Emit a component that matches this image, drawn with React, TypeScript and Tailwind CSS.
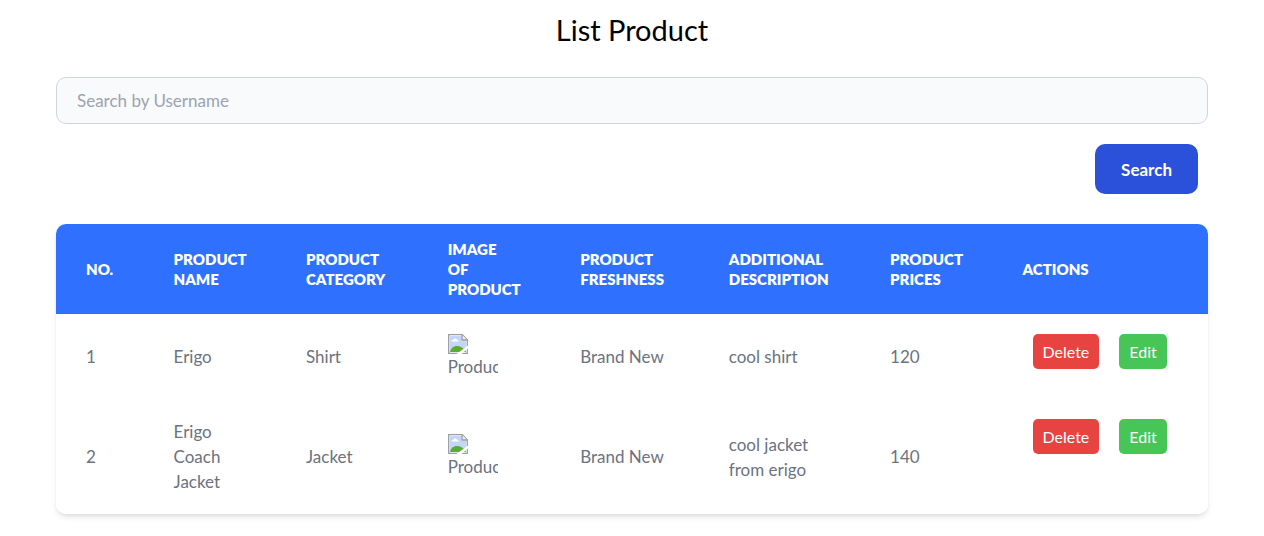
import React, { useState } from "react";

interface Product {
  id: number;
  name: string;
  category: string;
  freshness: string;
  description: string;
  price: number;
}

const products: Product[] = [
  { id: 1, name: "Erigo", category: "Shirt", freshness: "Brand New", description: "cool shirt", price: 120 },
  { id: 2, name: "Erigo Coach Jacket", category: "Jacket", freshness: "Brand New", description: "cool jacket from erigo", price: 140 },
];

const headings = [
  "No.",
  "Product Name",
  "Product Category",
  "Image of Product",
  "Product Freshness",
  "Additional Description",
  "Product Prices",
  "Actions",
];

function MissingImage() {
  return (
    <div className="h-[45px] w-[50px] overflow-hidden">
      <svg className="block size-5" viewBox="0 0 20 20" aria-hidden="true">
        <path d="M.7.7h13.6l5 5v13.6H.7z" fill="#fff" stroke="#9c9c9c" strokeWidth="1.3" />
        <path d="M2 2h11.500v5H18v11H2z" fill="#c3d6f7" />
        <path d="M3.500 7.500c0-1.400 1-2.200 2.100-2.100C6 4.200 8.600 4.200 9 5.800c1.200 0 1.600.8 1.600 1.700z" fill="#fff" />
        <path d="M2 18c.8-3.800 3.400-6 6.800-6 4.200 0 7.400 2.400 9.200 6z" fill="#5bad2f" />
        <path d="M14 .7v5.300h5.300" fill="#eee" stroke="#9c9c9c" strokeWidth="1.3" />
        <path d="M20 11.500 8.500 20h5L20 14.500z" fill="#fff" />
      </svg>
      <span className="block h-[25px] whitespace-nowrap leading-[25px]">Product</span>
    </div>
  );
}

export default function App() {
  const [query, setQuery] = useState("");
  return (
    <main className="bg-white px-14 pt-2.5 pb-5 font-['Lato',sans-serif] text-[17px] leading-[25px]">
      <h1 className="text-center text-[29px] leading-10 text-black">List Product</h1>
      <form className="mt-[27px]" onSubmit={(e) => e.preventDefault()}>
        <input
          type="text"
          aria-label="Search by Username"
          placeholder="Search by Username"
          value={query}
          onChange={(e) => setQuery(e.target.value)}
          className="block h-[47px] w-full rounded-[10px] border border-[#d1d5db] bg-[#f9fafb] px-5 text-[#111827] outline-none placeholder:text-[#9ca3af]"
        />
        <div className="mt-5 flex justify-end pr-2.5">
          <button type="submit" className="h-[50px] rounded-[10px] bg-[#2b50da] px-[26px] font-bold text-white">
            Search
          </button>
        </div>
      </form>
      <div className="mt-[30px] overflow-hidden rounded-[10px] shadow-[0_4px_6px_-1px_rgba(0,0,0,0.1),0_2px_4px_-1px_rgba(0,0,0,0.06)]">
        <table className="w-full table-fixed text-left text-[#6b7280]">
          <colgroup>
            <col className="w-[7.6%]" />
            <col className="w-[11.5%]" />
            <col className="w-[12.3%]" />
            <col className="w-[11.5%]" />
            <col className="w-[12.9%]" />
            <col className="w-[14%]" />
            <col className="w-[11.5%]" />
            <col />
          </colgroup>
          <thead className="bg-[#2f70ff] text-[15px] leading-5 text-white uppercase">
            <tr>
              {headings.map((h) => (
                <th key={h} scope="col" className="px-[30px] py-[15px] font-extrabold">
                  {h}
                </th>
              ))}
            </tr>
          </thead>
          <tbody>
            {products.map((p) => (
              <tr key={p.id} className="bg-white">
                <td className="px-[30px] py-5">{p.id}</td>
                <td className="px-[30px] py-5">{p.name}</td>
                <td className="px-[30px] py-5">{p.category}</td>
                <td className="px-[30px] py-5">
                  <MissingImage />
                </td>
                <td className="py-5 pl-[30px] pr-5">{p.freshness}</td>
                <td className="px-[30px] py-5">{p.description}</td>
                <td className="px-[30px] py-5">{p.price}</td>
                <td className="px-[30px] py-5 align-top">
                  <div className="flex gap-5 px-2.5 text-base">
                    <button type="button" className="h-[35px] rounded-[5px] bg-[#e74341] px-2.5 text-white">
                      Delete
                    </button>
                    <button type="button" className="h-[35px] rounded-[5px] bg-[#48c557] px-2.5 text-white">
                      Edit
                    </button>
                  </div>
                </td>
              </tr>
            ))}
          </tbody>
        </table>
      </div>
    </main>
  );
}
